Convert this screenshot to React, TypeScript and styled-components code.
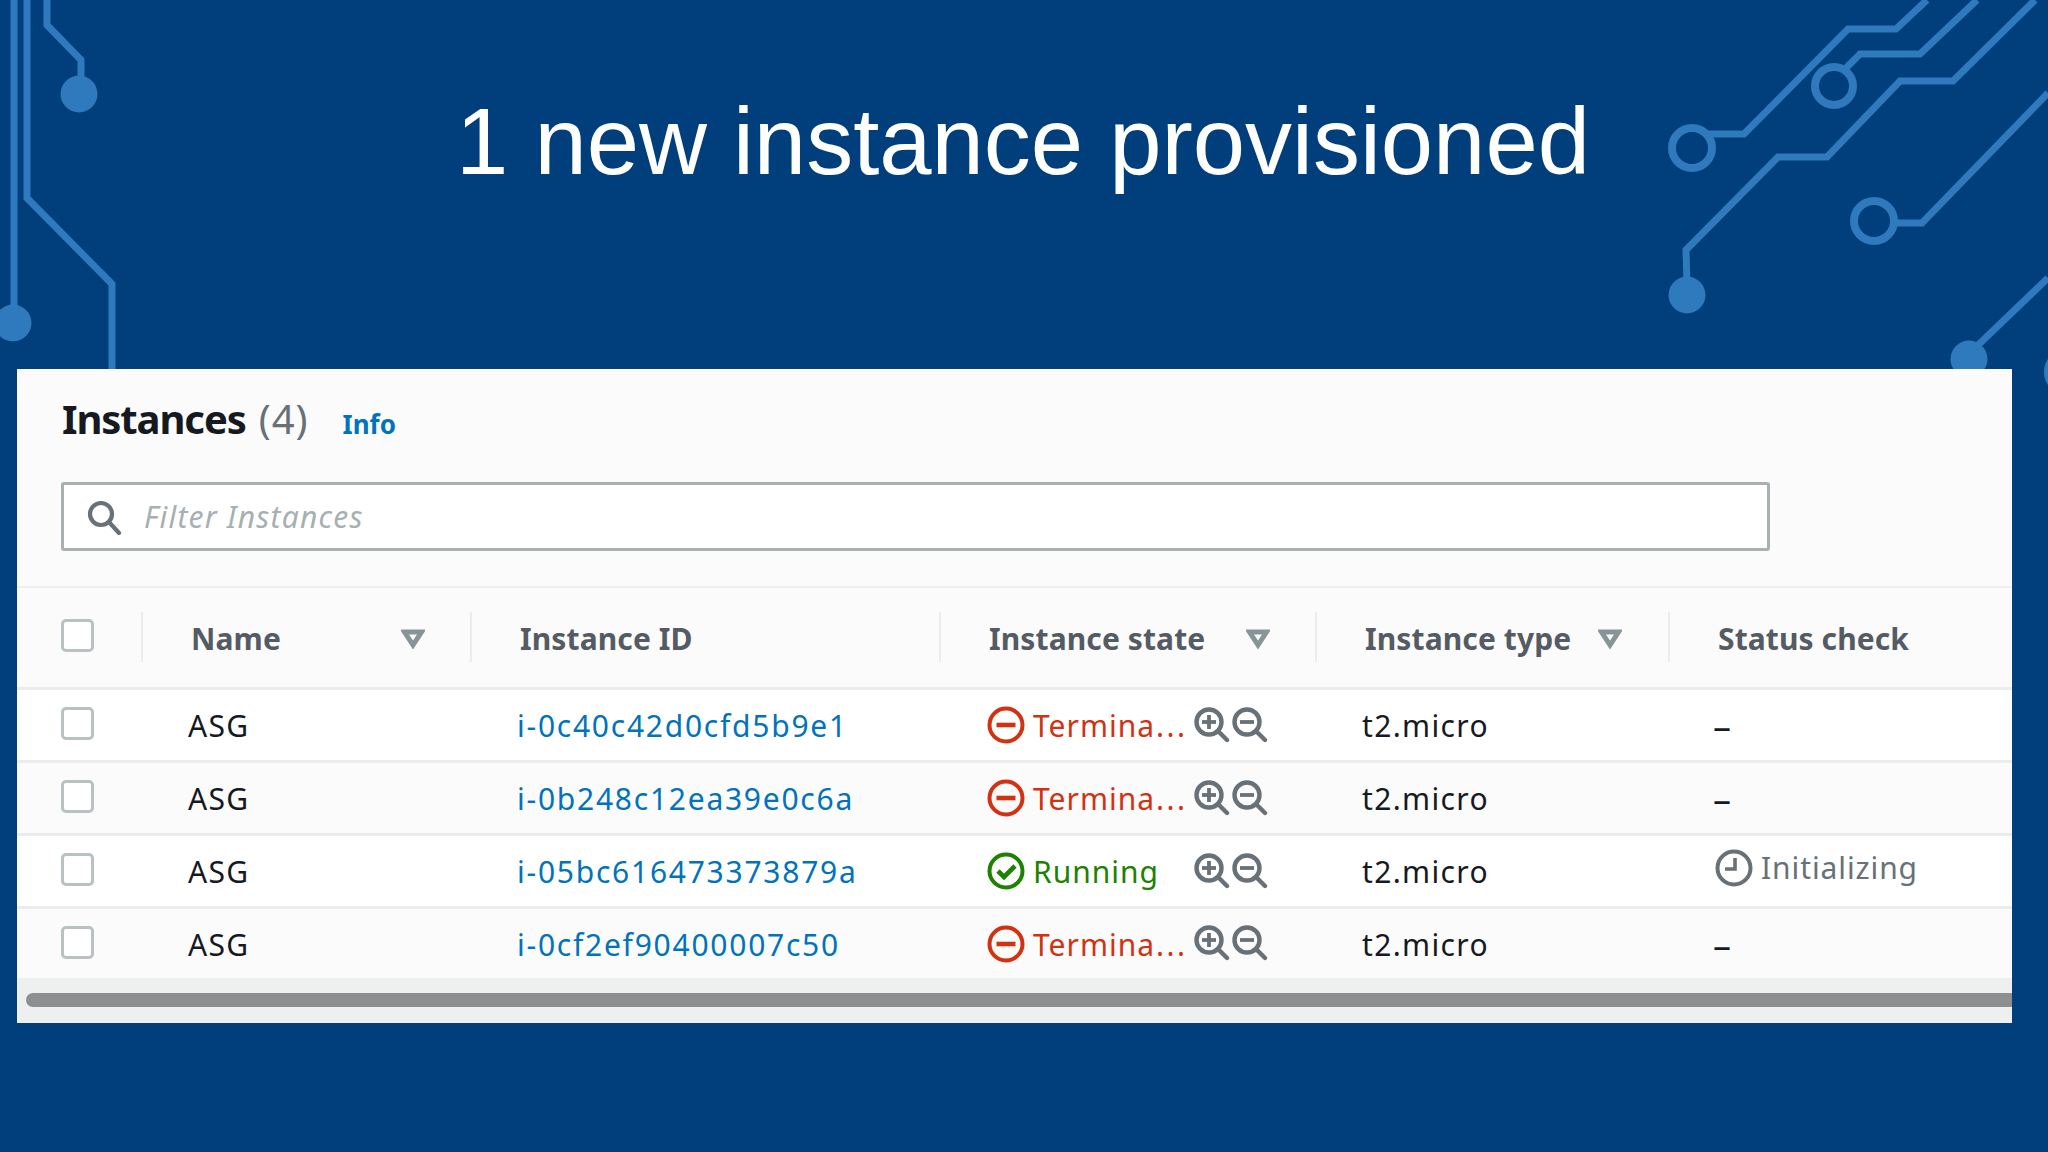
import React from "react";
import styled, { createGlobalStyle } from "styled-components";

const Global = createGlobalStyle`
  html, body { margin: 0; padding: 0; width: 2048px; height: 1152px; overflow: hidden; background: #003f7c; }
`;

const Slide = styled.div`
  position: relative;
  width: 2048px;
  height: 1152px;
  overflow: hidden;
  background: #003f7c;
  font-family: "Noto Sans", "Liberation Sans", sans-serif;
`;

const Circuit = styled.svg`
  position: absolute;
  inset: 0;
  width: 2048px;
  height: 1152px;
`;

const Content = styled.div`
  position: relative;
  display: flex;
  flex-direction: column;
`;

const TitleBar = styled.h1`
  margin: 0;
  height: 369px;
  box-sizing: border-box;
  padding: 80px 0 0 0;
  width: 2046px;
  text-align: center;
  font: 400 94px/124px "Liberation Sans", Arial, sans-serif;
  color: #ffffff;
`;

const Panel = styled.section`
  margin-left: 17px;
  width: 1995px;
  height: 654px;
  background: #fbfbfb;
  display: flex;
  flex-direction: column;
`;

const PanelHead = styled.div`
  height: 219px;
  box-sizing: border-box;
  padding: 19px 0 0 45px;
  border-bottom: 2px solid #eef0f0;
`;

const HeadingRow = styled.div`
  display: flex;
  align-items: baseline;
  height: 70px;
`;

const Heading = styled.h2`
  margin: 0;
  font: 700 40px/62px "Noto Sans", sans-serif;
  letter-spacing: -1.1px;
  color: #16191f;
`;

const Count = styled.span`
  font-weight: 400;
  color: #687078;
  margin-left: 13px;
  letter-spacing: 1px;
`;

const InfoLink = styled.a`
  margin-left: 34px;
  font: 700 26px/40px "Noto Sans", sans-serif;
  color: #0073bb;
`;

const SearchBox = styled.div`
  margin-top: 24px;
  width: 1709px;
  height: 69px;
  box-sizing: border-box;
  margin-left: -1px;
  display: flex;
  align-items: center;
  gap: 22px;
  padding-left: 22px;
  background: #ffffff;
  border: 3px solid #a9b0b2;
  border-radius: 3px;
`;

const Placeholder = styled.span`
  font: italic 400 30px/40px "Noto Sans", sans-serif;
  letter-spacing: 1.2px;
  color: #a6afb2;
`;

const cols = "125px 329px 469px 376px 353px 343px";

const HeaderRow = styled.div`
  display: grid;
  grid-template-columns: ${cols};
  height: 99px;
  border-bottom: 3px solid #eaeded;
  background: #fbfbfb;
`;

const HeadCell = styled.div<{ $divider?: boolean }>`
  position: relative;
  display: flex;
  align-items: center;
  justify-content: space-between;
  padding: 3px 0 0 49px;
  font: 700 30px/40px "Noto Sans", sans-serif;
  letter-spacing: 0.1px;
  color: #545b64;
  &::after {
    content: "";
    display: ${(p) => (p.$divider ? "block" : "none")};
    position: absolute;
    right: -1px;
    top: 24px;
    height: 50px;
    width: 2px;
    background: #eaeded;
  }
`;

const CheckCell = styled.div<{ $divider?: boolean }>`
  position: relative;
  display: flex;
  align-items: center;
  padding: 0 0 3px 44px;
  &::after {
    content: "";
    display: ${(p) => (p.$divider ? "block" : "none")};
    position: absolute;
    right: -1px;
    top: 24px;
    height: 50px;
    width: 2px;
    background: #eaeded;
  }
`;

const HeadCheckCell = styled(CheckCell)`
  padding-bottom: 5px;
`;

const CheckBox = styled.span`
  display: block;
  width: 33px;
  height: 33px;
  box-sizing: border-box;
  background: #ffffff;
  border: 3px solid #b9c1c3;
  border-radius: 5px;
`;

const FilterWrap = styled.span<{ $right: number }>`
  display: flex;
  margin-right: ${(p) => p.$right}px;
`;

const Row = styled.div<{ $alt: boolean; $last: boolean }>`
  display: grid;
  grid-template-columns: ${cols};
  height: ${(p) => (p.$last ? "69px" : "70px")};
  border-bottom: ${(p) => (p.$last ? "0" : "3px solid #eaeded")};
  background: ${(p) => (p.$alt ? "#fbfbfb" : "#ffffff")};
`;

const Cell = styled.div`
  display: flex;
  align-items: center;
  padding: 2px 0 0 46px;
  font: 400 30px/40px "Noto Sans", sans-serif;
  letter-spacing: 1.35px;
  color: #16191f;
  white-space: nowrap;
`;

const InstanceLink = styled.a`
  color: #0073bb;
  letter-spacing: 1.75px;
`;

const StateCell = styled(Cell)`
  padding-left: 47px;
  padding-right: 0;
  gap: 6px;
`;

const StateIcon = styled.span`
  display: flex;
  margin-top: -2px;
`;

const StateLabel = styled.span<{ $color: string }>`
  color: ${(p) => p.$color};
  width: 160px;
  margin-left: 2px;
  letter-spacing: 1px;
`;

const Dots = styled.span`
  letter-spacing: 2.4px;
  margin-left: 1px;
`;

const ZoomIcons = styled.span`
  display: flex;
  gap: 2px;
  margin: -3px 0 0 -5px;
`;

const StatusWrap = styled.span`
  display: flex;
  align-items: center;
  gap: 8px;
  margin-top: -9px;
  letter-spacing: 0.9px;
  color: #687078;
`;

const DashMark = styled.span`
  font-size: 36px;
  letter-spacing: 0;
  margin-left: -2px;
`;

const Footer = styled.div`
  flex: 1;
  background: #eef0f0;
  padding: 15px 0 0 9px;
`;

const ScrollThumb = styled.div`
  height: 14px;
  background: #8c8e8f;
  border-radius: 7px 0 0 7px;
`;

const SearchIcon = () => (
  <svg width="36" height="36" viewBox="0 0 36 36" fill="none" stroke="#687078" strokeWidth="4.2">
    <circle cx="15" cy="15" r="11" />
    <path d="M23 23l10 11" strokeLinecap="round" />
  </svg>
);

const FilterIcon = () => (
  <svg width="24" height="20" viewBox="0 0 24 20" fill="none" stroke="#879596" strokeWidth="5">
    <path d="M3.5 3h17L12 16z" />
  </svg>
);

const StopIcon = () => (
  <svg width="38" height="38" viewBox="0 0 38 38" fill="none" stroke="#d13212" strokeWidth="4">
    <circle cx="19" cy="19" r="16.5" />
    <path d="M9.5 19h19" strokeWidth="4.6" />
  </svg>
);

const OkIcon = () => (
  <svg width="38" height="38" viewBox="0 0 38 38" fill="none" stroke="#1d8102" strokeWidth="4">
    <circle cx="19" cy="19" r="16.5" />
    <path d="M11 19l6 6 11-11" strokeWidth="4.6" />
  </svg>
);

const ClockIcon = () => (
  <svg width="38" height="38" viewBox="0 0 38 38" fill="none" stroke="#687078" strokeWidth="4">
    <circle cx="19" cy="19" r="16.5" />
    <path d="M20 9v11h-10" strokeWidth="3.6" />
  </svg>
);

const ZoomIcon = ({ plus }: { plus?: boolean }) => (
  <svg width="36" height="36" viewBox="0 0 36 36" fill="none" stroke="#687078" strokeWidth="4.4">
    <circle cx="15" cy="15" r="12.5" />
    <path d="M24 24l9 9" strokeLinecap="round" />
    <path d="M8 15h14" strokeWidth="3.8" />
    {plus && <path d="M15 8v14" strokeWidth="3.8" />}
  </svg>
);

const rows = [
  { id: "i-0c40c42d0cfd5b9e1", running: false },
  { id: "i-0b248c12ea39e0c6a", running: false },
  { id: "i-05bc616473373879a", running: true },
  { id: "i-0cf2ef90400007c50", running: false },
];

export default function App() {
  return (
    <Slide>
      <Global />
      <Circuit viewBox="0 0 2048 1152" fill="none" stroke="#2f79bd" strokeWidth="7">
        <path d="M14 0V323" />
        <circle cx="13" cy="323" r="18.5" fill="#2f79bd" stroke="none" />
        <path d="M27 0V198L112 284V372" />
        <path d="M47 0V25L81 60V94" />
        <circle cx="79" cy="94" r="18.5" fill="#2f79bd" stroke="none" />
        <circle cx="1692" cy="148" r="20" strokeWidth="8" />
        <path d="M1708 134H1744L1848 29H1896L1927 0" />
        <circle cx="1834" cy="86" r="19" strokeWidth="8" />
        <path d="M1846 68L1860 54H1920L1977 0" />
        <circle cx="1687" cy="295" r="18.5" fill="#2f79bd" stroke="none" />
        <path d="M1687 285L1686 250L1778 157H1827L1900 81H1953L2035 0" />
        <circle cx="1874" cy="221" r="20" strokeWidth="8" />
        <path d="M1894 223H1922L2048 93" />
        <circle cx="1969" cy="359" r="18.5" fill="#2f79bd" stroke="none" />
        <path d="M1975 348L2048 278" />
        <circle cx="2068" cy="372" r="20" strokeWidth="8" />
      </Circuit>
      <Content>
        <TitleBar>1 new instance provisioned</TitleBar>
        <Panel>
          <PanelHead>
            <HeadingRow>
              <Heading>
                Instances<Count>(4)</Count>
              </Heading>
              <InfoLink>Info</InfoLink>
            </HeadingRow>
            <SearchBox>
              <SearchIcon />
              <Placeholder>Filter Instances</Placeholder>
            </SearchBox>
          </PanelHead>
          <HeaderRow>
            <HeadCheckCell $divider>
              <CheckBox />
            </HeadCheckCell>
            <HeadCell $divider>
              Name
              <FilterWrap $right={46}>
                <FilterIcon />
              </FilterWrap>
            </HeadCell>
            <HeadCell $divider>Instance ID</HeadCell>
            <HeadCell $divider>
              Instance state
              <FilterWrap $right={46}>
                <FilterIcon />
              </FilterWrap>
            </HeadCell>
            <HeadCell $divider>
              Instance type
              <FilterWrap $right={47}>
                <FilterIcon />
              </FilterWrap>
            </HeadCell>
            <HeadCell>Status check</HeadCell>
          </HeaderRow>
          {rows.map((r, i) => (
            <Row key={r.id} $alt={i % 2 === 1} $last={i === rows.length - 1}>
              <CheckCell>
                <CheckBox />
              </CheckCell>
              <Cell>ASG</Cell>
              <Cell>
                <InstanceLink>{r.id}</InstanceLink>
              </Cell>
              <StateCell>
                <StateIcon>{r.running ? <OkIcon /> : <StopIcon />}</StateIcon>
                <StateLabel $color={r.running ? "#1d8102" : "#d13212"}>
                  {r.running ? (
                    "Running"
                  ) : (
                    <>
                      Termina<Dots>...</Dots>
                    </>
                  )}
                </StateLabel>
                <ZoomIcons>
                  <ZoomIcon plus />
                  <ZoomIcon />
                </ZoomIcons>
              </StateCell>
              <Cell>t2.micro</Cell>
              <Cell>
                {r.running ? (
                  <StatusWrap>
                    <ClockIcon />
                    Initializing
                  </StatusWrap>
                ) : (
                  <DashMark>–</DashMark>
                )}
              </Cell>
            </Row>
          ))}
          <Footer>
            <ScrollThumb />
          </Footer>
        </Panel>
      </Content>
    </Slide>
  );
}
